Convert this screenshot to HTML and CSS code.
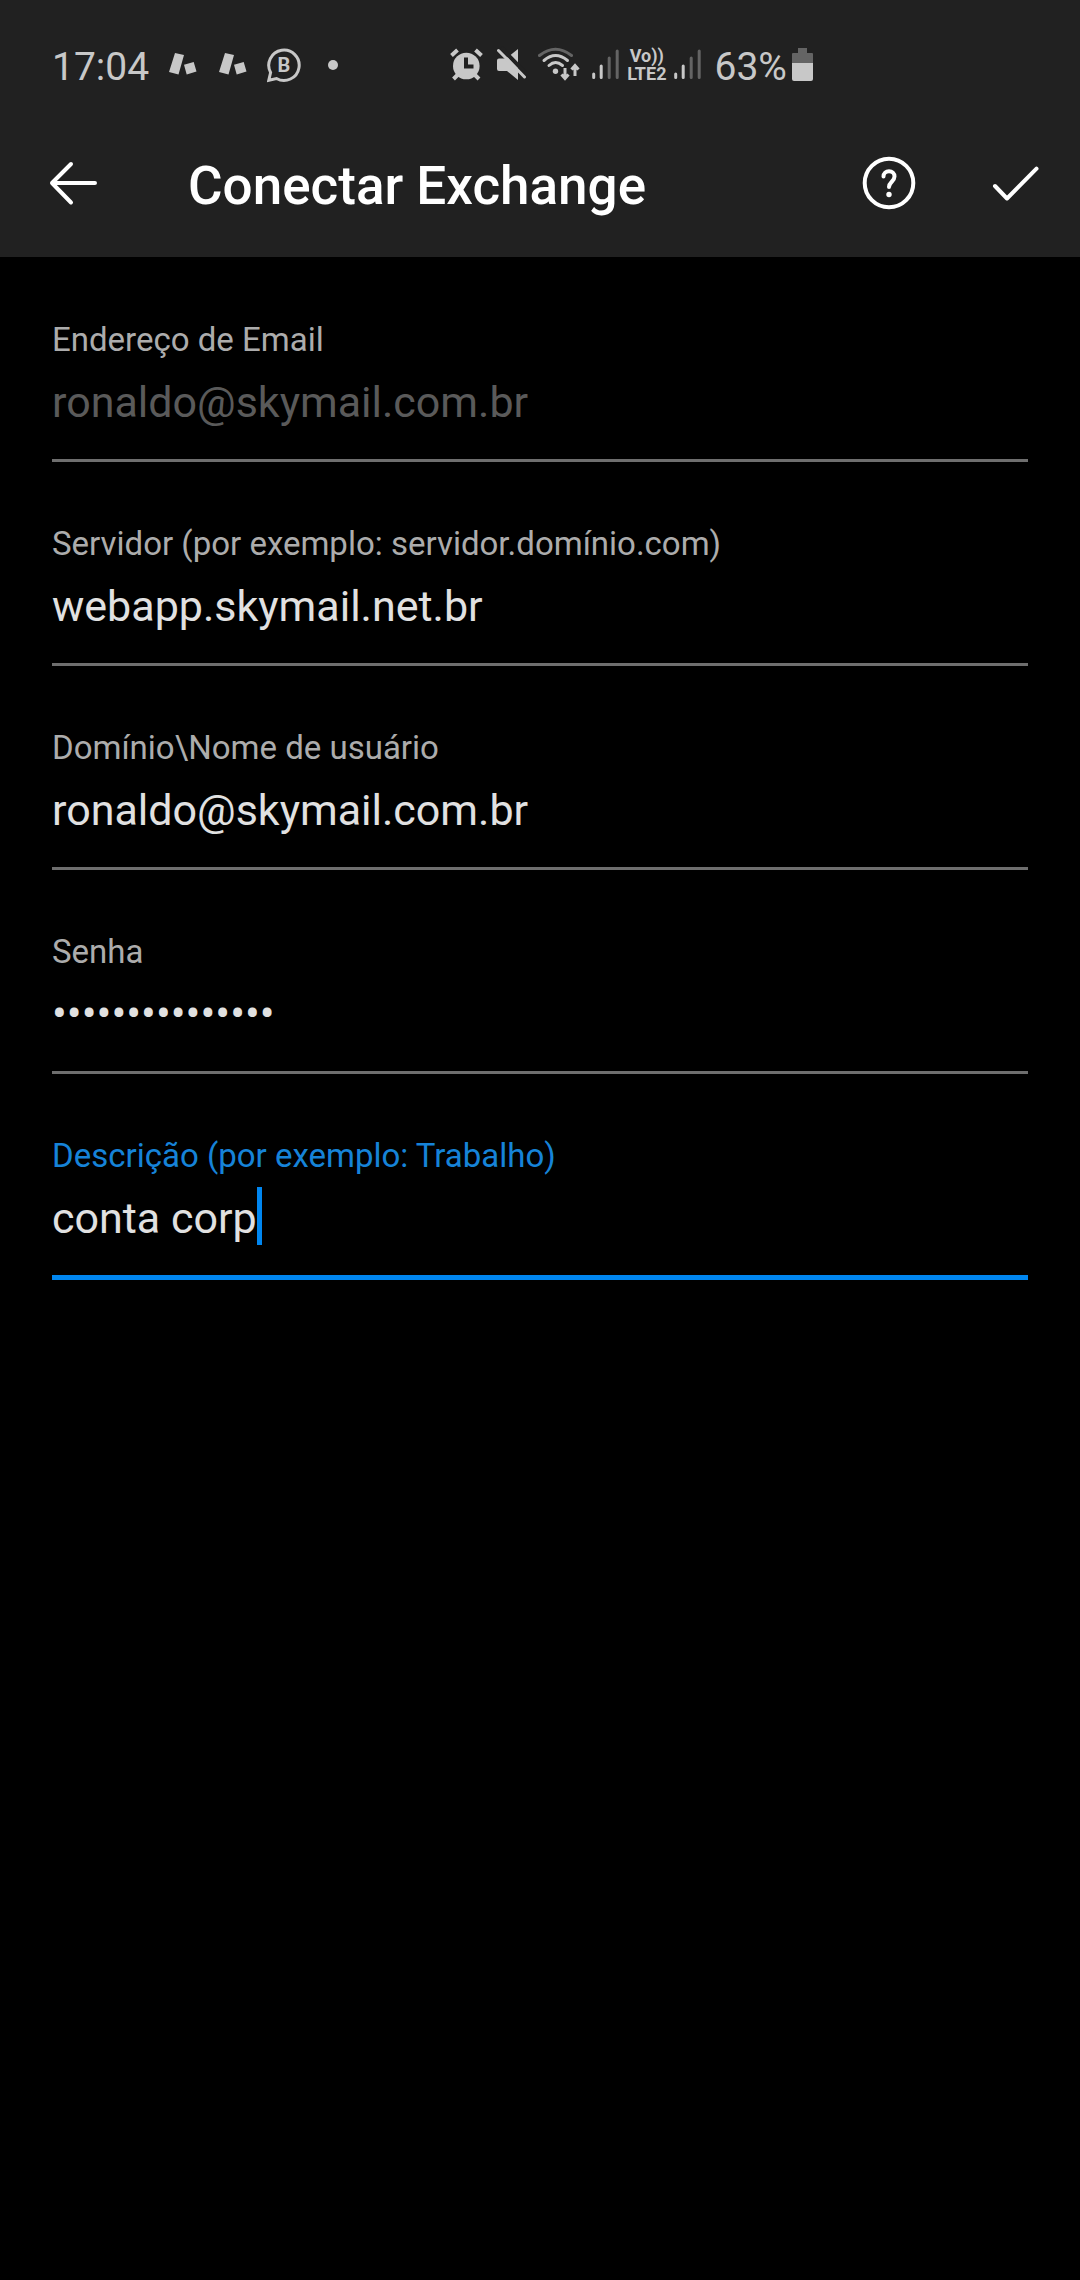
FILE: index.html
```html
<!DOCTYPE html>
<html lang="pt-BR">
<head>
  <meta charset="UTF-8" />
  <meta name="viewport" content="width=device-width, initial-scale=1.0" />
  <title>Conectar Exchange</title>
  <link rel="stylesheet" href="styles.css">
</head>
<body>
  <header class="header">
    <div class="status-bar">
      <div class="status-left">
        <span class="status-text">17:04</span>
        <svg class="notification" width="28" height="40" viewBox="0 0 28 40">
          <path d="M6 8l9 2-5.500 19.500L0 27zM15 19.700L24.700 17l2.800 9.500-9.800 3z" />
        </svg>
        <svg class="notification" width="28" height="40" viewBox="0 0 28 40">
          <path d="M6 8l9 2-5.500 19.500L0 27zM15 19.700L24.700 17l2.800 9.500-9.800 3z" />
        </svg>
        <svg width="34" height="40" viewBox="0 0 34 40">
          <path class="line" d="M3.600 27.500A15.200 15.200 0 1 1 9.500 33.500L1.800 35.200z" />
          <text class="badge-letter" x="17" y="27">B</text>
        </svg>
        <span class="dot"></span>
      </div>

      <div class="status-right">
        <div class="status-icons">
          <!-- alarm -->
          <svg width="36" height="40" viewBox="0 0 36 40">
            <circle cx="16.300" cy="21" r="13.300" />
            <path class="line thick" d="M1.500 10.500l6-5.500M25.500 5l6 5.500M3.500 34l5-5M29 34l-5-5" />
            <path class="cut" d="M16 12.500v9h7.500" />
          </svg>
          <!-- muted -->
          <svg width="30" height="40" viewBox="0 0 30 40">
            <path d="M2 13.500h7L21 4v31L10 26H2q-2 0-2-2v-8.500q0-2 2-2z" />
            <path class="cut" d="M4 2.500l26 27" />
            <path class="line" d="M1.500 5.500l26 26.500" />
          </svg>
          <!-- wifi -->
          <svg width="43" height="40" viewBox="0 0 43 40">
            <path class="line dim" d="M1.500 10.500Q17.500-2 33.500 10.500" />
            <path class="line" d="M6 15.500Q17.500 5.500 29.500 15.500M11 20.500Q17.500 14.500 24.500 20.500" />
            <circle cx="17.500" cy="26.300" r="2.700" />
            <path class="line arrows" d="M27 23v10M23.500 29.500l3.500 4 3.500-4M37 31V21M33.500 24.500l3.500-4 3.500 4" />
          </svg>
          <!-- signal -->
          <svg width="27" height="40" viewBox="0 0 27 40">
            <path class="line" d="M1.700 29v3.500M9.200 21v11.500" />
            <path class="line dim" d="M17.200 13v19.500M25.200 6v26.500" />
          </svg>
        </div>
        <span class="volte"><span>Vo))</span><span>LTE2</span></span>
        <svg width="27" height="40" viewBox="0 0 27 40">
          <path class="line" d="M1.700 29v3.500M9.200 21v11.500" />
          <path class="line dim" d="M17.200 13v19.500M25.200 6v26.500" />
        </svg>
        <div class="battery">
          <span class="status-text">63%</span>
          <svg width="21" height="40" viewBox="0 0 21 40">
            <path class="battery-empty" d="M6 3h9v5h5q1 0 1 1v9H0V9q0-1 1-1h5z" />
            <path d="M0 18h21v16q0 2-2 2H2q-2 0-2-2z" />
          </svg>
        </div>
      </div>
    </div>

    <div class="app-bar">
      <button class="icon-button" type="button" aria-label="Voltar">
        <svg width="50" height="54" viewBox="0 0 50 54">
          <path d="M47 27H4M23 8L4 27l19 19.500" />
        </svg>
      </button>
      <h1 class="title">Conectar Exchange</h1>
      <button class="icon-button" type="button" aria-label="Ajuda">
        <svg width="54" height="54" viewBox="0 0 54 54">
          <circle cx="27" cy="27" r="24.300" />
          <path d="M21.500 20.500c0-3.300 2.400-5.300 5.500-5.300s5.500 2.200 5.500 5.300c0 5-5.500 5.500-5.500 10.500" />
          <circle class="help-dot" cx="27" cy="38.500" r="2.700" />
        </svg>
      </button>
      <button class="icon-button" type="submit" form="exchange-form" aria-label="Concluir">
        <svg width="48" height="54" viewBox="0 0 48 54">
          <path d="M3 30l12 12.500L44.500 12.700" />
        </svg>
      </button>
    </div>
  </header>

  <main>
    <form class="form" id="exchange-form">
      <div class="field">
        <label for="email">Endereço de Email</label>
        <div class="field-row">
          <input id="email" type="email" value="ronaldo@skymail.com.br" disabled>
        </div>
      </div>
      <div class="field">
        <label for="server">Servidor (por exemplo: servidor.domínio.com)</label>
        <div class="field-row">
          <input id="server" type="text" value="webapp.skymail.net.br">
        </div>
      </div>
      <div class="field">
        <label for="user">Domínio\Nome de usuário</label>
        <div class="field-row">
          <input id="user" type="text" value="ronaldo@skymail.com.br">
        </div>
      </div>
      <div class="field">
        <label for="password">Senha</label>
        <div class="field-row">
          <input id="password" type="password" value="senhaexchange15">
        </div>
      </div>
      <div class="field active">
        <label for="description">Descrição (por exemplo: Trabalho)</label>
        <div class="field-row">
          <input id="description" type="text" value="conta corp">
          <span class="caret"></span>
        </div>
      </div>
    </form>
  </main>
</body>
</html>
```

FILE: styles.css
```css
:root {
  --bar-color: #212121;
  --bg-color: #000000;
  --status-color: #c8c8c8;
  --status-dim: #646464;
  --text-color: #e1e1e1;
  --label-color: #acacac;
  --disabled-color: #5a5a5a;
  --line-color: #6e6e6e;
  --accent-color: #0086f0;
  --accent-text: #1683d8;
}

* {
  box-sizing: border-box;
  margin: 0;
  padding: 0;
}

body {
  font-family: Roboto, "Noto Sans", sans-serif;
  color: var(--text-color);
  background: var(--bg-color);
}

svg {
  display: block;
  flex-shrink: 0;
}

.header {
  background: var(--bar-color);
}

/* status bar */
.status-bar {
  display: flex;
  align-items: center;
  gap: 112px;
  height: 109px;
  padding: 21px 52px 0;
}

.status-left,
.status-right,
.status-icons,
.battery {
  display: flex;
  align-items: center;
}

.status-left {
  gap: 20px;
}

.status-right {
  gap: 8px;
}

.status-icons {
  gap: 11px;
}

.battery {
  gap: 5px;
  margin-left: 5px;
}

.status-text {
  padding-top: 3px;
  font-size: 39px;
  line-height: 44px;
  color: var(--status-color);
}

.notification + .notification {
  margin-left: 2px;
}

.status-bar svg {
  fill: var(--status-color);
}

.status-bar .line {
  fill: none;
  stroke: var(--status-color);
  stroke-width: 3;
  stroke-linecap: round;
}

.status-bar .thick {
  stroke-width: 4;
  stroke-linecap: butt;
}

.status-bar .cut {
  fill: none;
  stroke: var(--bar-color);
  stroke-width: 4;
}

.status-bar .dim {
  stroke: var(--status-dim);
}

.status-bar .arrows {
  stroke-linecap: butt;
}

.status-bar .battery-empty {
  fill: var(--status-dim);
}

.badge-letter {
  font-size: 20px;
  font-weight: 700;
  text-anchor: middle;
}

.dot {
  width: 10px;
  height: 10px;
  margin-left: 7px;
  border-radius: 50%;
  background: var(--status-color);
}

.volte {
  display: flex;
  flex-direction: column;
  align-items: center;
  font-size: 18px;
  font-weight: 700;
  line-height: 18px;
  color: var(--status-color);
}

/* app bar */
.app-bar {
  display: flex;
  align-items: center;
  height: 148px;
  padding: 0 40px 0 48px;
}

.title {
  flex: 1;
  margin-left: 90px;
  padding-top: 5px;
  font-size: 53px;
  font-weight: 500;
  line-height: 60px;
  color: #ffffff;
}

.icon-button {
  border: none;
  background: none;
  cursor: pointer;
}

.icon-button + .icon-button {
  margin-left: 76px;
}

.icon-button svg {
  fill: none;
  stroke: #ffffff;
  stroke-width: 4;
  stroke-linecap: round;
  stroke-linejoin: round;
}

.icon-button .help-dot {
  fill: #ffffff;
  stroke: none;
}

/* form */
.form {
  display: flex;
  flex-direction: column;
  gap: 62px;
  padding: 63px 52px;
}

.field {
  display: flex;
  flex-direction: column;
  gap: 11px;
  padding-bottom: 26px;
  border-bottom: 3px solid var(--line-color);
}

.field label {
  font-size: 33px;
  line-height: 40px;
  color: var(--label-color);
}

.field-row {
  display: flex;
}

.field input {
  flex: 1;
  min-width: 0;
  height: 62px;
  border: none;
  outline: none;
  background: transparent;
  font-family: inherit;
  font-size: 43px;
  color: var(--text-color);
}

.field input:disabled {
  color: var(--disabled-color);
}

.field input[type="password"] {
  font-size: 44px;
}

.field.active {
  border-bottom: 5px solid var(--accent-color);
}

.field.active label {
  color: var(--accent-text);
}

.field.active input {
  flex: none;
  field-sizing: content;
}

.caret {
  width: 5px;
  height: 58px;
  background: var(--accent-color);
}
```
